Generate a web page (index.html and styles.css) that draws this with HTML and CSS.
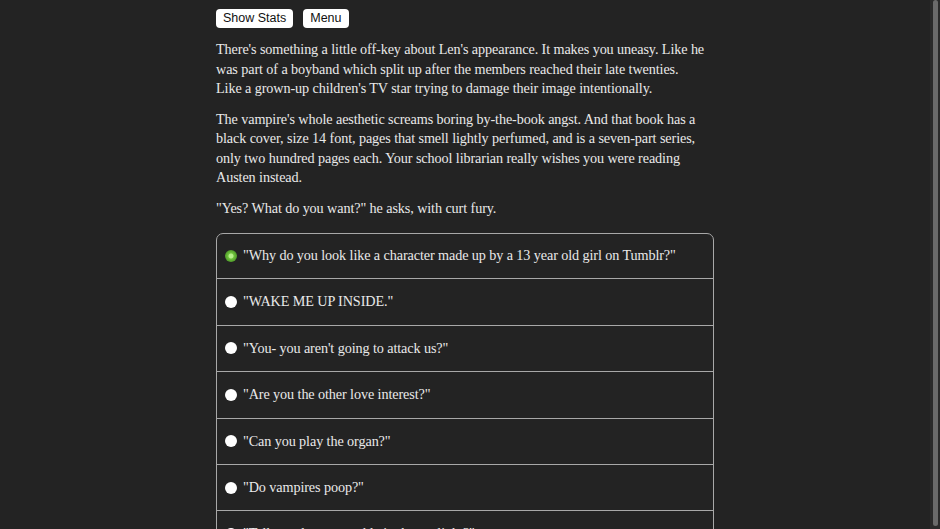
FILE: index.html
```html
<!DOCTYPE html>
<html>
<head>
<meta charset="utf-8">
<link rel="stylesheet" href="styles.css">
</head>
<body>
<div class="page">
  <main class="main">
    <div class="column">
      <div class="toolbar">
        <button class="btn">Show Stats</button>
        <button class="btn">Menu</button>
      </div>
      <p>There's something a little off-key about Len's appearance. It makes you uneasy. Like he was part of a boyband which split up after the members reached their late twenties.<br>Like a grown-up children's TV star trying to damage their image intentionally.</p>
      <p>The vampire's whole aesthetic screams boring by-the-book angst. And that book has a black cover, size 14 font, pages that smell lightly perfumed, and is a seven-part series, only two hundred pages each. Your school librarian really wishes you were reading Austen instead.</p>
      <p>"Yes? What do you want?" he asks, with curt fury.</p>
      <div class="choices">
        <label class="choice"><span class="radio checked"></span><span>"Why do you look like a character made up by a 13 year old girl on Tumblr?"</span></label>
        <label class="choice"><span class="radio"></span><span>"WAKE ME UP INSIDE."</span></label>
        <label class="choice"><span class="radio"></span><span>"You- you aren't going to attack us?"</span></label>
        <label class="choice"><span class="radio"></span><span>"Are you the other love interest?"</span></label>
        <label class="choice"><span class="radio"></span><span>"Can you play the organ?"</span></label>
        <label class="choice"><span class="radio"></span><span>"Do vampires poop?"</span></label>
        <label class="choice"><span class="radio"></span><span>"Tell me, do you sparkle in the sunlight?"</span></label>
      </div>
    </div>
  </main>
  <div class="scrollbar"><div class="thumb"></div></div>
</div>
</body>
</html>
```
FILE: styles.css
```css
html, body {
  margin: 0;
  padding: 0;
  background: #232323;
}
.page {
  display: flex;
  height: 529px;
  overflow: hidden;
}
.main {
  flex: 1;
  display: flex;
  justify-content: center;
  overflow: hidden;
}
.column {
  width: 498px;
  padding-top: 9px;
  color: #e9e9e9;
  font-family: "Liberation Serif", "DejaVu Serif", serif;
  font-size: 14.2px;
  letter-spacing: -0.1px;
  line-height: 19.5px;
}
.toolbar {
  display: flex;
  gap: 10px;
  margin-bottom: 12px;
}
.btn {
  font-family: "Liberation Sans", Arial, sans-serif;
  font-size: 12.5px;
  color: #111;
  background: #fff;
  border: none;
  border-radius: 4px;
  height: 19px;
  padding: 0 7px;
  line-height: 19px;
}
p {
  margin: 0 0 11px 0;
}
.choices {
  margin-top: 15px;
  border: 1px solid #a8a8a8;
  border-radius: 7px 7px 0 0;
}
.choice {
  display: flex;
  align-items: center;
  gap: 6px;
  height: 45.4px;
  padding-left: 8px;
  border-bottom: 1px solid #a8a8a8;
}
.choice:first-child {
  height: 44.4px;
}
.radio {
  width: 12px;
  height: 12px;
  border-radius: 50%;
  background: #fff;
  flex: none;
}
.radio.checked {
  background: radial-gradient(circle, #b6f08a 0 2px, #6fc23c 3px, #4f9a2a 6px);
}
.scrollbar {
  width: 10px;
  background: #2b2b2b;
  display: flex;
  justify-content: center;
  padding: 0 1px;
  box-sizing: border-box;
}
.thumb {
  width: 5px;
  margin: 0 auto;
  height: 526px;
  background: #6b6b6b;
  border-radius: 3px;
}
```
